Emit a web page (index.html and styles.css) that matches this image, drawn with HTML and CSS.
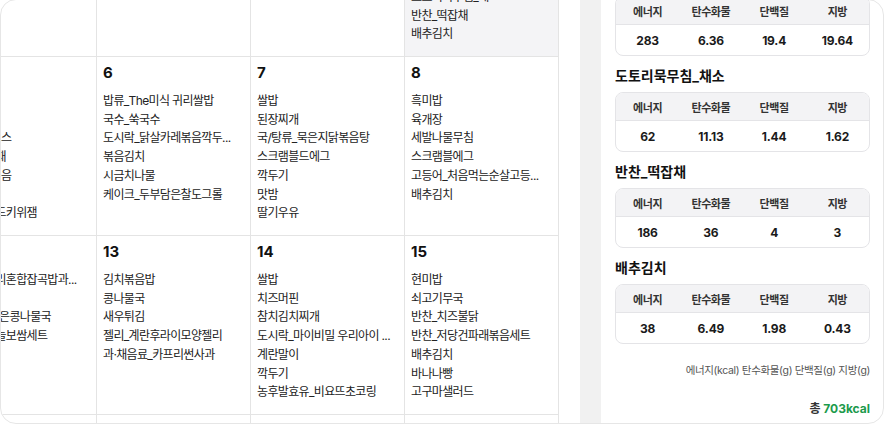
FILE: index.html
```html
<!DOCTYPE html>
<html lang="ko">
<head>
<meta charset="utf-8">
<title>식단 캘린더</title>
<link rel="stylesheet" href="styles.css">
</head>
<body>
<div class="frame">
  <section class="calendar">
    <div class="grid">
      <div class="cell"><div class="day">29</div></div>
      <div class="cell"><div class="day">30</div></div>
      <div class="cell"><div class="day">31</div></div>
      <div class="cell selected">
        <div class="day">1</div>
        <ul class="menu">
          <li>쌀밥</li>
          <li>미역국</li>
          <li>돈육간장불고기</li>
          <li>요구르트</li>
          <li>도토리묵무침_채소</li>
          <li>반찬_떡잡채</li>
          <li>배추김치</li>
        </ul>
      </div>

      <div class="cell">
        <div class="day">5</div>
        <ul class="menu">
          <li>잡곡밥</li>
          <li>국_된장국</li>
          <li>갈릭디핑소스</li>
          <li>쌈_모둠야채</li>
          <li>오징어채볶음</li>
          <li>요구르트</li>
          <li>모닝빵_골드키위잼</li>
        </ul>
      </div>
      <div class="cell">
        <div class="day">6</div>
        <ul class="menu">
          <li>밥류_The미식 귀리쌀밥</li>
          <li>국수_쑥국수</li>
          <li>도시락_닭살카레볶음깍두...</li>
          <li>볶음김치</li>
          <li>시금치나물</li>
          <li>케이크_두부담은찰도그롤</li>
        </ul>
      </div>
      <div class="cell">
        <div class="day">7</div>
        <ul class="menu">
          <li>쌀밥</li>
          <li>된장찌개</li>
          <li>국/탕류_묵은지닭볶음탕</li>
          <li>스크램블드에그</li>
          <li>깍두기</li>
          <li>맛밤</li>
          <li>딸기우유</li>
        </ul>
      </div>
      <div class="cell">
        <div class="day">8</div>
        <ul class="menu">
          <li>흑미밥</li>
          <li>육개장</li>
          <li>세발나물무침</li>
          <li>스크램블에그</li>
          <li>고등어_처음먹는순살고등...</li>
          <li>배추김치</li>
        </ul>
      </div>

      <div class="cell">
        <div class="day">12</div>
        <ul class="menu">
          <li>밥류_찰귀리혼합잡곡밥과...</li>
          <li>국_어묵탕</li>
          <li>국/탕류_맑은콩나물국</li>
          <li>반찬_통마늘보쌈세트</li>
        </ul>
      </div>
      <div class="cell">
        <div class="day">13</div>
        <ul class="menu">
          <li>김치볶음밥</li>
          <li>콩나물국</li>
          <li>새우튀김</li>
          <li>젤리_계란후라이모양젤리</li>
          <li>과·채음료_카프리썬사과</li>
        </ul>
      </div>
      <div class="cell">
        <div class="day">14</div>
        <ul class="menu">
          <li>쌀밥</li>
          <li>치즈머핀</li>
          <li>참치김치찌개</li>
          <li>도시락_마이비밀 우리아이 ...</li>
          <li>계란말이</li>
          <li>깍두기</li>
          <li>농후발효유_비요뜨초코링</li>
        </ul>
      </div>
      <div class="cell">
        <div class="day">15</div>
        <ul class="menu">
          <li>현미밥</li>
          <li>쇠고기무국</li>
          <li>반찬_치즈불닭</li>
          <li>반찬_저당건파래볶음세트</li>
          <li>배추김치</li>
          <li>바나나빵</li>
          <li>고구마샐러드</li>
        </ul>
      </div>

      <div class="cell"></div>
      <div class="cell"></div>
      <div class="cell"></div>
      <div class="cell"></div>
    </div>
  </section>

  <div class="divider"></div>

  <aside class="panel">
    <div class="panel-inner">
      <h3 class="food">돈육간장불고기</h3>
      <div class="card">
        <div class="row head"><span>에너지</span><span>탄수화물</span><span>단백질</span><span>지방</span></div>
        <div class="row vals"><span>283</span><span>6.36</span><span>19.4</span><span>19.64</span></div>
      </div>

      <h3 class="food">도토리묵무침_채소</h3>
      <div class="card">
        <div class="row head"><span>에너지</span><span>탄수화물</span><span>단백질</span><span>지방</span></div>
        <div class="row vals"><span>62</span><span>11.13</span><span>1.44</span><span>1.62</span></div>
      </div>

      <h3 class="food">반찬_떡잡채</h3>
      <div class="card">
        <div class="row head"><span>에너지</span><span>탄수화물</span><span>단백질</span><span>지방</span></div>
        <div class="row vals"><span>186</span><span>36</span><span>4</span><span>3</span></div>
      </div>

      <h3 class="food">배추김치</h3>
      <div class="card">
        <div class="row head"><span>에너지</span><span>탄수화물</span><span>단백질</span><span>지방</span></div>
        <div class="row vals"><span>38</span><span>6.49</span><span>1.98</span><span>0.43</span></div>
      </div>

      <p class="legend">에너지(kcal) 탄수화물(g) 단백질(g) 지방(g)</p>
      <p class="total">총 <strong>703kcal</strong></p>
    </div>
  </aside>
</div>
</body>
</html>
```

FILE: styles.css
```css
* { box-sizing: border-box; }

html, body {
  margin: 0;
  padding: 0;
  background: #ffffff;
  overflow: hidden;
}

body {
  font-family: "Inter", "Noto Sans CJK KR", sans-serif;
  color: #1f1f1f;
}

.frame {
  width: 884px;
  height: 425px;
  margin-top: -1px;
  border: 1px solid #e6e6e6;
  border-radius: 16px;
  overflow: hidden;
  display: flex;
  background: #fff;
}

/* calendar */
.calendar {
  flex: 0 0 579px;
  overflow: hidden;
}

.grid {
  display: grid;
  grid-template-columns: repeat(4, 154px);
  grid-auto-rows: 179px;
  margin: -122px 0 0 -58px;
}

.cell {
  border-right: 1px solid #e4e4e4;
  border-bottom: 1px solid #e4e4e4;
  padding: 7px 8px 0 6px;
  overflow: hidden;
  min-width: 0;
}

.cell.selected {
  background: #f4f4f6;
}

.day {
  font-size: 15px;
  font-weight: 700;
  line-height: 18px;
  color: #111;
}

.menu {
  list-style: none;
  margin: 10px 0 0;
  padding: 0;
  font-size: 12px;
  letter-spacing: -0.65px;
  line-height: 18.7px;
  color: #222;
}

.menu li {
  white-space: nowrap;
  overflow: hidden;
  text-overflow: ellipsis;
}

.divider {
  flex: 0 0 21px;
  background: #f1f1f1;
}

/* nutrition panel */
.panel {
  flex: 1 1 auto;
  min-width: 0;
  overflow: hidden;
  padding: 0 13px 0 14px;
}

.panel-inner {
  margin-top: -40px;
}

.food {
  margin: 10px 0 6px;
  font-size: 14px;
  line-height: 20px;
  font-weight: 700;
  color: #111;
}

.card {
  border: 1px solid #e4e4e7;
  border-radius: 8px;
  overflow: hidden;
}

.row {
  display: grid;
  grid-template-columns: repeat(4, 1fr);
  align-items: center;
  text-align: center;
}

.row.head {
  height: 28px;
  background: #f3f3f5;
  border-bottom: 1px solid #e4e4e7;
  font-size: 11px;
  letter-spacing: -0.4px;
  font-weight: 700;
  color: #333;
}

.row.vals {
  height: 30px;
  font-size: 12px;
  letter-spacing: -0.2px;
  font-weight: 700;
  color: #1a1a1a;
}

.legend {
  margin: 19px 0 0;
  text-align: right;
  font-size: 10.5px;
  letter-spacing: -0.35px;
  line-height: 16px;
  color: #555;
}

.total {
  margin: 21px 0 0;
  text-align: right;
  font-size: 12px;
  line-height: 18px;
  font-weight: 700;
  color: #333;
}

.total strong {
  color: #1c9a4c;
  font-weight: 700;
}
```
